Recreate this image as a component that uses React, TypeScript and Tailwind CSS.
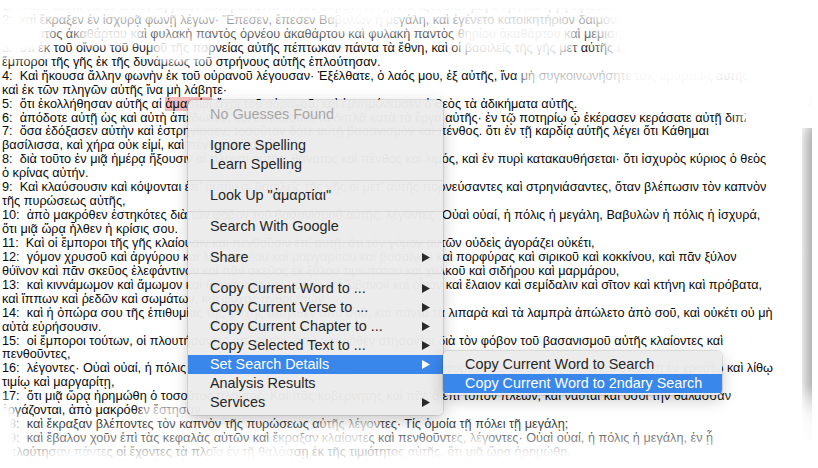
import React from "react";

const rows: string[] = [
  "1:  Μετὰ ταῦτα εἶδον ἄλλον ἄγγελον καταβαίνοντα ἐκ τοῦ οὐρανοῦ, ἔχοντα ἐξουσίαν μεγάλην, καὶ ἡ γῆ ἐφωτίσθη ἐκ τῆς δόξης αὐτοῦ.",
  "2:  καὶ ἔκραξεν ἐν ἰσχυρᾷ φωνῇ λέγων· Ἔπεσεν, ἔπεσεν Βαβυλὼν ἡ μεγάλη, καὶ ἐγένετο κατοικητήριον δαιμονίων καὶ φυλακὴ παντὸς",
  "πνεύματος ἀκαθάρτου καὶ φυλακὴ παντὸς ὀρνέου ἀκαθάρτου καὶ φυλακὴ παντὸς θηρίου ἀκαθάρτου καὶ μεμισημένου,",
  "3:  ὅτι ἐκ τοῦ οἴνου τοῦ θυμοῦ τῆς πορνείας αὐτῆς πέπτωκαν πάντα τὰ ἔθνη, καὶ οἱ βασιλεῖς τῆς γῆς μετ αὐτῆς ἐπόρνευσαν, καὶ οἱ",
  "ἔμποροι τῆς γῆς ἐκ τῆς δυνάμεως τοῦ στρήνους αὐτῆς ἐπλούτησαν.",
  "4:  Καὶ ἤκουσα ἄλλην φωνὴν ἐκ τοῦ οὐρανοῦ λέγουσαν· Ἐξέλθατε, ὁ λαός μου, ἐξ αὐτῆς, ἵνα μὴ συγκοινωνήσητε ταῖς ἁμαρτίαις αὐτῆς,",
  "καὶ ἐκ τῶν πληγῶν αὐτῆς ἵνα μὴ λάβητε·",
  "__V5__",
  "6:  ἀπόδοτε αὐτῇ ὡς καὶ αὐτὴ ἀπέδωκεν, καὶ διπλώσατε τὰ διπλᾶ κατὰ τὰ ἔργα αὐτῆς· ἐν τῷ ποτηρίῳ ᾧ ἐκέρασεν κεράσατε αὐτῇ διπλοῦν·",
  "7:  ὅσα ἐδόξασεν αὐτὴν καὶ ἐστρηνίασεν, τοσοῦτον δότε αὐτῇ βασανισμὸν καὶ πένθος. ὅτι ἐν τῇ καρδίᾳ αὐτῆς λέγει ὅτι Κάθημαι",
  "βασίλισσα, καὶ χήρα οὐκ εἰμί, καὶ πένθος οὐ μὴ ἴδω·",
  "8:  διὰ τοῦτο ἐν μιᾷ ἡμέρᾳ ἥξουσιν αἱ πληγαὶ αὐτῆς, θάνατος καὶ πένθος καὶ λιμός, καὶ ἐν πυρὶ κατακαυθήσεται· ὅτι ἰσχυρὸς κύριος ὁ θεὸς",
  "ὁ κρίνας αὐτήν.",
  "9:  Καὶ κλαύσουσιν καὶ κόψονται ἐπ' αὐτὴν οἱ βασιλεῖς τῆς γῆς οἱ μετ' αὐτῆς πορνεύσαντες καὶ στρηνιάσαντες, ὅταν βλέπωσιν τὸν καπνὸν",
  "τῆς πυρώσεως αὐτῆς,",
  "10:  ἀπὸ μακρόθεν ἑστηκότες διὰ τὸν φόβον τοῦ βασανισμοῦ αὐτῆς, λέγοντες· Οὐαὶ οὐαί, ἡ πόλις ἡ μεγάλη, Βαβυλὼν ἡ πόλις ἡ ἰσχυρά,",
  "ὅτι μιᾷ ὥρᾳ ἦλθεν ἡ κρίσις σου.",
  "11:  Καὶ οἱ ἔμποροι τῆς γῆς κλαίουσιν καὶ πενθοῦσιν ἐπ' αὐτῇ, ὅτι τὸν γόμον αὐτῶν οὐδεὶς ἀγοράζει οὐκέτι,",
  "12:  γόμον χρυσοῦ καὶ ἀργύρου καὶ λίθου τιμίου καὶ μαργαρίτου καὶ βυσσίνου καὶ πορφύρας καὶ σιρικοῦ καὶ κοκκίνου, καὶ πᾶν ξύλον",
  "θύϊνον καὶ πᾶν σκεῦος ἐλεφάντινον καὶ πᾶν σκεῦος ἐκ ξύλου τιμιωτάτου καὶ χαλκοῦ καὶ σιδήρου καὶ μαρμάρου,",
  "13:  καὶ κιννάμωμον καὶ ἄμωμον καὶ θυμιάματα καὶ μύρον καὶ λίβανον καὶ οἶνον καὶ ἔλαιον καὶ σεμίδαλιν καὶ σῖτον καὶ κτήνη καὶ πρόβατα,",
  "καὶ ἵππων καὶ ῥεδῶν καὶ σωμάτων, καὶ ψυχὰς ἀνθρώπων.",
  "14:  καὶ ἡ ὀπώρα σου τῆς ἐπιθυμίας τῆς ψυχῆς ἀπῆλθεν ἀπὸ σοῦ, καὶ πάντα τὰ λιπαρὰ καὶ τὰ λαμπρὰ ἀπώλετο ἀπὸ σοῦ, καὶ οὐκέτι οὐ μὴ",
  "αὐτὰ εὑρήσουσιν.",
  "15:  οἱ ἔμποροι τούτων, οἱ πλουτήσαντες ἀπ' αὐτῆς, ἀπὸ μακρόθεν στήσονται διὰ τὸν φόβον τοῦ βασανισμοῦ αὐτῆς κλαίοντες καὶ",
  "πενθοῦντες,",
  "16:  λέγοντες· Οὐαὶ οὐαί, ἡ πόλις ἡ μεγάλη, ἡ περιβεβλημένη βύσσινον καὶ πορφυροῦν καὶ κόκκινον, καὶ κεχρυσωμένη ἐν χρυσίῳ καὶ λίθῳ",
  "τιμίῳ καὶ μαργαρίτῃ,",
  "17:  ὅτι μιᾷ ὥρᾳ ἠρημώθη ὁ τοσοῦτος πλοῦτος. Καὶ πᾶς κυβερνήτης καὶ πᾶς ὁ ἐπὶ τόπον πλέων, καὶ ναῦται καὶ ὅσοι τὴν θάλασσαν",
  "ἐργάζονται, ἀπὸ μακρόθεν ἔστησαν",
  "18:  καὶ ἔκραξαν βλέποντες τὸν καπνὸν τῆς πυρώσεως αὐτῆς λέγοντες· Τίς ὁμοία τῇ πόλει τῇ μεγάλῃ;",
  "19:  καὶ ἔβαλον χοῦν ἐπὶ τὰς κεφαλὰς αὐτῶν καὶ ἔκραξαν κλαίοντες καὶ πενθοῦντες, λέγοντες· Οὐαὶ οὐαί, ἡ πόλις ἡ μεγάλη, ἐν ᾗ",
  "ἐπλούτησαν πάντες οἱ ἔχοντες τὰ πλοῖα ἐν τῇ θαλάσσῃ ἐκ τῆς τιμιότητος αὐτῆς, ὅτι μιᾷ ὥρᾳ ἠρημώθη.",
  "20:  Εὐφραίνου ἐπ' αὐτῇ, οὐρανέ, καὶ οἱ ἅγιοι καὶ οἱ ἀπόστολοι καὶ οἱ προφῆται, ὅτι ἔκρινεν ὁ θεὸς τὸ κρίμα ὑμῶν ἐξ αὐτῆς.",
];

function Arrow({ white }: { white?: boolean }) {
  return (
    <svg width="8" height="9" viewBox="0 0 8 9" className="shrink-0">
      <polygon points="0,0 8,4.5 0,9" fill={white ? "#ffffff" : "#2a2a2a"} />
    </svg>
  );
}

function Item({
  label,
  arrow,
  active,
  disabled,
}: {
  label: string;
  arrow?: boolean;
  active?: boolean;
  disabled?: boolean;
}) {
  return (
    <div
      className={
        "h-[19px] flex items-center justify-between pl-[22px] pr-[13px] whitespace-nowrap " +
        (active ? "bg-[#3a87ec] text-white" : disabled ? "text-[#a6a6a6]" : "text-[#262626]")
      }
    >
      <span>{label}</span>
      {arrow ? <Arrow white={active} /> : null}
    </div>
  );
}

function Sep() {
  return (
    <div className="h-[12px] flex items-center">
      <div className="h-px w-full bg-[#d6d6d6]" />
    </div>
  );
}

export default function App() {
  return (
    <div className="relative w-[818px] h-[468px] overflow-hidden bg-white flex font-['Liberation_Sans',Arial,sans-serif]">
      {/* document text */}
      <div className="w-[800px] overflow-hidden pl-[2px] text-[12.7px] leading-[13.94px] text-[#0a0a0a]">
        {rows.map((r, i) =>
          r === "__V5__" ? (
            <div key={i} className="whitespace-pre">
              {"5:  ὅτι ἐκολλήθησαν αὐτῆς αἱ "}
              <span className="bg-[#f6bcbc]">ἁμαρτίαι</span>
              {" ἄχρι τοῦ οὐρανοῦ, καὶ ἐμνημόνευσεν ὁ θεὸς τὰ ἀδικήματα αὐτῆς."}
            </div>
          ) : (
            <div key={i} className="whitespace-pre">
              {r}
            </div>
          )
        )}
      </div>

      {/* window edge / scroller shadow */}
      <div className="w-[18px] flex flex-col pt-[92px] pb-[28px] [mask-image:linear-gradient(to_bottom,transparent,black_14%,black_82%,transparent)]">
        <div className="ml-[2px] w-[10px] flex-1 bg-linear-to-r from-[#e8e8e8] via-[#cbcbcb] to-[#b6b6b6]" />
      </div>

      {/* torn / faded edges */}
      <div className="pointer-events-none absolute left-0 top-0 w-full h-[50px] bg-linear-to-b from-white from-15% via-white/60 via-45% to-transparent" />
      <div className="pointer-events-none absolute left-[-20px] top-[14px] w-[70px] h-[44px] rounded-full bg-white blur-[6px]" />
      <div className="pointer-events-none absolute left-[78px] top-[28px] w-[66px] h-[16px] rounded-full bg-white/90 blur-[4px]" />
      <div className="pointer-events-none absolute left-[152px] top-[38px] w-[62px] h-[24px] rounded-full bg-white/90 blur-[4px]" />
      <div className="pointer-events-none absolute left-[330px] top-[10px] w-[70px] h-[20px] rounded-full bg-white/90 blur-[5px]" />
      <div className="pointer-events-none absolute left-[455px] top-[20px] w-[120px] h-[40px] rounded-full bg-white/90 blur-[6px]" />
      <div className="pointer-events-none absolute left-[600px] top-[-20px] w-[260px] h-[110px] rounded-full bg-white blur-[10px]" />
      <div className="pointer-events-none absolute left-[520px] top-[68px] w-[200px] h-[22px] rounded-full bg-white/80 blur-[6px]" />
      <div className="pointer-events-none absolute left-[735px] top-[60px] w-[90px] h-[70px] rounded-full bg-white blur-[8px]" />
      <div className="pointer-events-none absolute left-[746px] top-[106px] w-[72px] h-[22px] bg-white" />

      <div className="pointer-events-none absolute left-0 bottom-0 w-full h-[56px] bg-linear-to-t from-white from-10% via-white/50 via-45% to-transparent" />
      <div className="pointer-events-none absolute left-[-18px] top-[400px] w-[36px] h-[70px] rounded-full bg-white blur-[5px]" />
      <div className="pointer-events-none absolute left-[140px] top-[405px] w-[50px] h-[14px] rounded-full bg-white/80 blur-[4px]" />
      <div className="pointer-events-none absolute left-[320px] top-[420px] w-[60px] h-[14px] rounded-full bg-white/80 blur-[4px]" />
      <div className="pointer-events-none absolute left-[270px] top-[434px] w-[100px] h-[14px] rounded-full bg-white/80 blur-[4px]" />
      <div className="pointer-events-none absolute left-[450px] top-[434px] w-[40px] h-[14px] rounded-full bg-white/70 blur-[4px]" />
      <div className="pointer-events-none absolute left-[50px] top-[448px] w-[60px] h-[14px] rounded-full bg-white/80 blur-[4px]" />
      <div className="pointer-events-none absolute left-[205px] top-[446px] w-[90px] h-[16px] rounded-full bg-white/80 blur-[4px]" />
      <div className="pointer-events-none absolute left-[380px] top-[450px] w-[460px] h-[50px] rounded-full bg-white blur-[8px]" />
      <div className="pointer-events-none absolute left-[720px] top-[400px] w-[120px] h-[60px] rounded-full bg-white/80 blur-[10px]" />

      {/* context menu */}
      <div className="absolute left-[188px] top-[100px] w-[255px] rounded-[5px] bg-[#ebebeb]/[0.97] ring-1 ring-black/10 shadow-[0_5px_16px_rgba(0,0,0,0.22)] pt-[5px] pb-[3px] text-[14.4px] leading-none overflow-hidden">
        <Item label="No Guesses Found" disabled />
        <Sep />
        <Item label="Ignore Spelling" />
        <Item label="Learn Spelling" />
        <Sep />
        <Item label={'Look Up "ἁμαρτίαι"'} />
        <Sep />
        <Item label="Search With Google" />
        <Sep />
        <Item label="Share" arrow />
        <Sep />
        <Item label="Copy Current Word to ..." arrow />
        <Item label="Copy Current Verse to ..." arrow />
        <Item label="Copy Current Chapter to ..." arrow />
        <Item label="Copy Selected Text to ..." arrow />
        <Item label="Set Search Details" arrow active />
        <Item label="Analysis Results" />
        <Item label="Services" arrow />
      </div>

      {/* submenu */}
      <div className="absolute left-[443px] top-[351px] w-[279px] rounded-[5px] bg-[#ebebeb]/[0.97] ring-1 ring-black/10 shadow-[0_5px_16px_rgba(0,0,0,0.22)] pt-[4px] pb-[2px] text-[14.4px] leading-none overflow-hidden">
        <Item label="Copy Current Word to Search" />
        <Item label="Copy Current Word to 2ndary Search" active />
      </div>
    </div>
  );
}
